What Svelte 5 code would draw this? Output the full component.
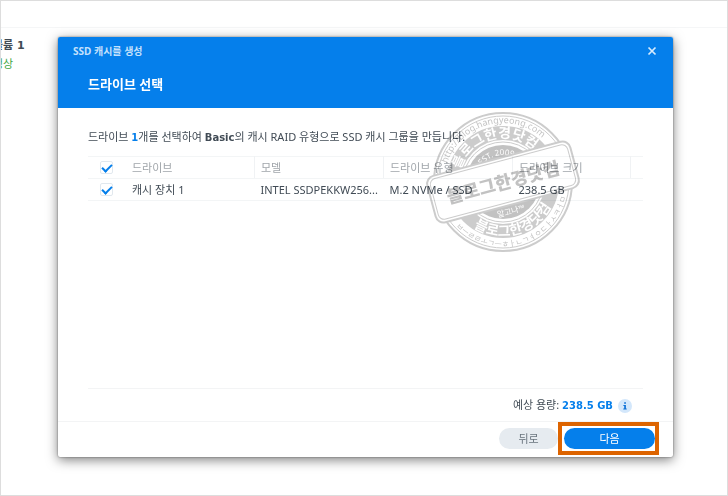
<script>
	const title = "SSD 캐시를 생성";
	const stepTitle = "드라이브 선택";

	let drives = [
		{
			name: "캐시 장치 1",
			model: "INTEL SSDPEKKW256...",
			type: "M.2 NVMe / SSD",
			size: 238.5,
			selected: true
		}
	];

	$: allSelected = drives.every((d) => d.selected);
	$: capacity = drives
		.filter((d) => d.selected)
		.reduce((sum, d) => sum + d.size, 0);

	function toggleAll() {
		const next = !allSelected;
		drives = drives.map((d) => ({ ...d, selected: next }));
	}
</script>

<div class="page">
	<div class="toolbar"></div>
	<div class="volume">
		<strong>볼륨 1</strong>
		<span class="status">정상</span>
	</div>
</div>

<div class="overlay">
	<div class="dialog" role="dialog" aria-label={title}>
		<header>
			<div class="title-bar">
				<span>{title}</span>
				<button class="close" aria-label="닫기">
					<svg viewBox="0 0 10 10" width="10" height="10">
						<path d="M1.5 1.5 L8.5 8.5 M8.5 1.5 L1.5 8.5" />
					</svg>
				</button>
			</div>
			<h1>{stepTitle}</h1>
		</header>

		<main>
			<p class="intro">
				드라이브 <b class="count">1</b>개를 선택하여 <b>Basic</b>의 캐시 RAID
				유형으로 SSD 캐시 그룹을 만듭니다.
			</p>

			<table>
				<thead>
					<tr>
						<th class="check">
							<input
								type="checkbox"
								aria-label="모두 선택"
								checked={allSelected}
								on:change={toggleAll}
							/>
						</th>
						<th class="name">드라이브</th>
						<th class="model">모델</th>
						<th class="type">드라이브 유형</th>
						<th class="size">드라이브 크기</th>
						<th class="rest"></th>
					</tr>
				</thead>
				<tbody>
					{#each drives as drive}
						<tr>
							<td class="check">
								<input
									type="checkbox"
									aria-label={drive.name}
									bind:checked={drive.selected}
								/>
							</td>
							<td>{drive.name}</td>
							<td>{drive.model}</td>
							<td>{drive.type}</td>
							<td>{drive.size} GB</td>
							<td></td>
						</tr>
					{/each}
				</tbody>
			</table>

			<div class="summary">
				<span>예상 용량: <b>{capacity} GB</b></span>
				<svg class="info" viewBox="0 0 14 14" width="14" height="14">
					<circle cx="7" cy="7" r="7" fill="#d3e7fb" />
					<path
						d="M6.2 3.2h1.7v1.6H6.2z M5.4 6h2.5v3.6h.8v1H5.3v-1h.9V7h-.8z"
						fill="#0a6fd6"
					/>
				</svg>
			</div>
		</main>

		<footer>
			<button class="back">뒤로</button>
			<div class="highlight">
				<button class="next">다음</button>
			</div>
		</footer>

		<svg class="stamp" viewBox="-78 -72 156 144" width="156" height="144">
			<defs>
				<path id="url-arc" d="M-59 0 A59 59 0 0 1 59 0" />
				<path id="top-arc" d="M-44 0 A44 44 0 0 1 44 0" />
				<path id="bottom-arc" d="M-54 0 A54 54 0 0 0 54 0" />
				<path id="edge-arc" d="M-65 0 A65 65 0 0 0 65 0" />
				<path id="est-arc" d="M-27 0 A27 27 0 0 1 27 0" />
			</defs>
			<circle r="69" class="paper" />
			<circle r="66" class="line" />
			<circle r="49" class="band" />
			<circle r="40" class="line" />
			<circle r="37" class="core" />
			<g class="ink" transform="rotate(-15)">
				<text class="url"><textPath href="#url-arc" startOffset="50%">http://blog.hangyeong.com</textPath></text>
				<text class="ring"><textPath href="#top-arc" startOffset="50%">블로그한경닷컴</textPath></text>
				<text class="ring"><textPath href="#bottom-arc" startOffset="50%">블로그한경닷컴</textPath></text>
				<text class="edge"><textPath href="#edge-arc" startOffset="50%">ㅂㅡㄹㄹㅗㄱㅡㅎㅏㄴㄱㅕㅇㄷㅏㅅㅋㅓㅁ</textPath></text>
				<text class="est"><textPath href="#est-arc" startOffset="50%">EST. 2009</textPath></text>
				<text class="est" y="33">알고나™</text>
				<rect x="-74" y="-24" width="148" height="48" rx="8" class="paper" />
				<rect x="-71" y="-21" width="142" height="42" rx="6" class="line" />
				<text class="name" y="7">블로그한경닷컴</text>
			</g>
		</svg>
	</div>
</div>

<style>
	:global(body) {
		margin: 0;
		font-family: "Noto Sans", "Noto Sans CJK KR", sans-serif;
		font-size: 11px;
		line-height: 16px;
		color: #414b55;
		background: #fff;
	}

	.page {
		box-sizing: border-box;
		height: 100vh;
		border: 1px solid #ddd;
		overflow: hidden;
	}

	.toolbar {
		height: 26px;
		border-bottom: 1px solid #f5f6f7;
	}

	/* scrolled partly out of view behind the dialog */
	.volume {
		display: flex;
		flex-direction: column;
		gap: 2px;
		margin: 10px 0 0 -8px;
	}

	.status {
		color: #3fa63f;
	}

	b,
	strong {
		font-family: "DejaVu Sans", "Noto Sans CJK KR", sans-serif;
	}

	b {
		font-size: 10px;
	}

	.overlay {
		position: fixed;
		inset: 0;
		display: flex;
		padding: 37px 55px 39px 58px;
	}

	.dialog {
		position: relative;
		flex: 1;
		display: flex;
		flex-direction: column;
		background: #fff;
		border-radius: 2px;
		box-shadow:
			0 0 2px rgba(0, 0, 0, 0.5),
			0 3px 12px rgba(0, 0, 0, 0.5);
	}

	header {
		height: 71px;
		color: #fff;
		background: #057feb;
		border-radius: 2px 2px 0 0;
	}

	.title-bar {
		display: flex;
		align-items: center;
		justify-content: space-between;
		padding: 6px 16px 0 15px;
		font-size: 10px;
		font-weight: bold;
		color: #c4e1fc;
	}

	h1 {
		margin: 15px 0 0 30px;
		font-size: 13px;
		line-height: 20px;
	}

	button {
		padding: 0;
		border: 0;
		font: inherit;
		cursor: pointer;
	}

	.close {
		display: flex;
		background: none;
	}

	.close path {
		stroke: #d8ebfd;
		stroke-width: 1.7;
	}

	main {
		flex: 1;
		display: flex;
		flex-direction: column;
		padding: 21px 30px 0;
	}

	.intro {
		margin: 0 0 10px;
	}

	.count {
		color: #057feb;
	}

	table {
		width: 100%;
		table-layout: fixed;
		border-collapse: collapse;
	}

	th,
	td {
		height: 21px;
		padding: 0 0 0 6px;
		text-align: left;
		border-top: 1px solid #f3f5f6;
		border-bottom: 1px solid #f3f5f6;
		white-space: nowrap;
	}

	th {
		font-weight: normal;
		color: #a0a5aa;
	}

	th.name,
	th.model,
	th.type,
	th.size {
		border-right: 1px solid #f0f2f4;
	}

	.check {
		width: 32px;
	}

	th.name,
	th.model,
	th.type {
		width: 122px;
	}

	.rest {
		width: 6px;
	}

	input {
		appearance: none;
		display: grid;
		place-content: center;
		box-sizing: border-box;
		width: 13px;
		height: 13px;
		margin: 0 0 0 6px;
		border: 1px solid #e1e8ee;
		border-radius: 2px;
		background: #fff;
	}

	input:checked::before {
		content: "";
		width: 8px;
		height: 4px;
		border: solid #057feb;
		border-width: 0 0 2px 2px;
		transform: translateY(-1px) rotate(-45deg);
	}

	.summary {
		display: flex;
		align-items: center;
		justify-content: flex-end;
		gap: 5px;
		margin-top: auto;
		padding: 8px 11px 7px 0;
		border-top: 1px solid #f3f4f5;
	}

	.summary b {
		color: #057feb;
	}

	footer {
		display: flex;
		align-items: center;
		justify-content: flex-end;
		padding: 0 14px 2px 0;
		border-top: 1px solid #f3f4f5;
	}

	footer button {
		height: 21px;
		border-radius: 11px;
	}

	.back {
		width: 59px;
		color: #6a747e;
		background: #e6ebf0;
	}

	.highlight {
		border: 4px solid #dd6400;
		padding: 2px 0 2px 2px;
	}

	.next {
		width: 91px;
		color: #fff;
		background: #057feb;
	}

	.stamp {
		position: absolute;
		top: 73px;
		right: 92px;
		opacity: 0.6;
		mix-blend-mode: multiply;
		pointer-events: none;
	}

	.paper {
		fill: #fff;
		stroke: #aaa;
		stroke-width: 2;
	}

	.line {
		fill: none;
		stroke: #aaa;
	}

	.band {
		fill: none;
		stroke: #aaa;
		stroke-width: 14;
	}

	.core {
		fill: #999;
	}

	.ink text {
		text-anchor: middle;
		fill: #999;
	}

	.ink .url {
		font-size: 9px;
	}

	.ink .ring {
		font-size: 14px;
		font-weight: bold;
		fill: #fff;
	}

	.ink .edge {
		font-size: 8px;
	}

	.ink .est {
		font-size: 8px;
		fill: #fff;
	}

	.ink .name {
		font-size: 18px;
		font-weight: 900;
	}
</style>
